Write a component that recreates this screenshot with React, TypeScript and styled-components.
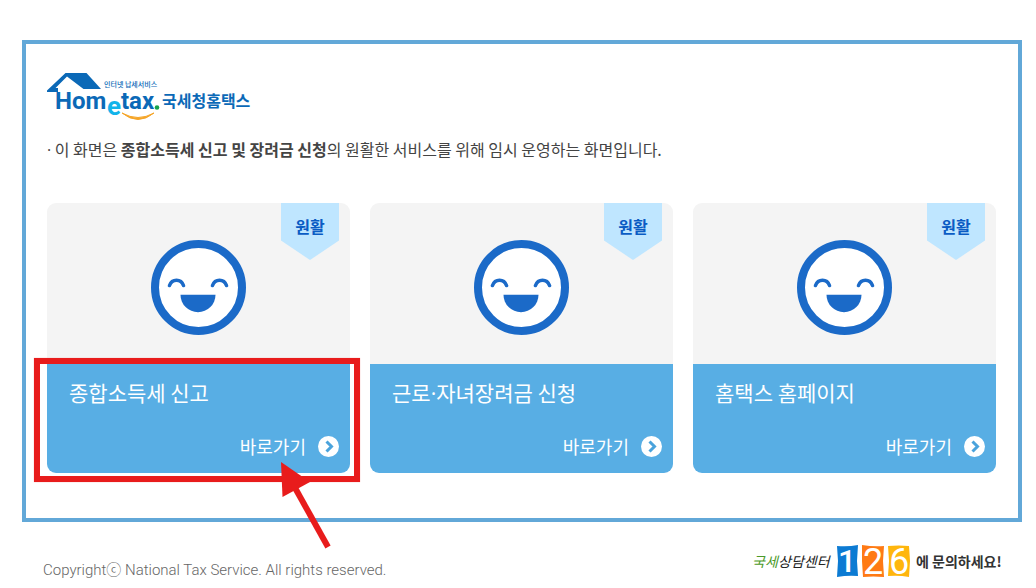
import React from "react";
import styled, { createGlobalStyle } from "styled-components";

const GlobalStyle = createGlobalStyle`
  * { box-sizing: border-box; }
  body {
    margin: 0;
    background: #ffffff;
    color: #444444;
    font-family: "Noto Sans CJK KR", sans-serif;
  }
`;

const Page = styled.div`
  padding: 40px 14px 8px 22px;
`;

const Frame = styled.main`
  border: 4px solid #62a8d8;
  padding: 28px 22px 45px 21px;
`;

const Brand = styled.h1`
  margin: 0;
  height: 50px;
  svg { display: block; }
`;

const Notice = styled.p`
  margin: 15px 0 42px;
  font-size: 16px;
  line-height: 24px;
`;

const MiddleDot = styled.span`
  font-family: "Open Sans", sans-serif;
  line-height: 1;
`;

const Cards = styled.div`
  display: grid;
  grid-template-columns: repeat(3, 1fr);
  gap: 20px;
`;

const Card = styled.section`
  position: relative;
`;

const Status = styled.div`
  position: relative;
  display: flex;
  justify-content: center;
  padding: 37px 0 29px;
  background: #f4f4f4;
  border-radius: 9px 9px 0 0;
`;

const Ribbon = styled.span`
  position: absolute;
  top: 0;
  right: 11px;
  width: 58px;
  height: 57px;
  padding-top: 11px;
  background: #bfe6ff;
  clip-path: polygon(0 0, 100% 0, 100% 66%, 50% 100%, 0 66%);
  color: #0a5cc4;
  font-size: 16px;
  font-weight: 700;
  line-height: 24px;
  text-align: center;
`;

const Panel = styled.div`
  position: relative;
  display: flex;
  flex-direction: column;
  gap: 30px;
  padding: 14px 11px 16px 22px;
  background: #58aee4;
  border-radius: 0 0 9px 9px;
  color: #ffffff;
`;

const Title = styled.h2`
  margin: 0;
  font-size: 21px;
  font-weight: 400;
  line-height: 28px;
`;

const GoLink = styled.a`
  display: flex;
  align-items: center;
  align-self: flex-end;
  gap: 12px;
  color: inherit;
  font-size: 18px;
  line-height: 21px;
  text-decoration: none;
`;

const Highlight = styled.div`
  position: absolute;
  inset: -6px -10px -9px -13px;
  border: 6px solid #e81c1c;
  box-shadow: 0 0 1px #f3a0a0;
  pointer-events: none;
`;

const Pointer = styled.svg`
  position: absolute;
  z-index: 1;
  top: 97px;
  right: 18px;
  pointer-events: none;
`;

const Footer = styled.footer`
  display: flex;
  justify-content: space-between;
  padding: 22px 19px 0 21px;
`;

const Copyright = styled.p`
  margin: 16px 0 0;
  color: #666666;
  font-family: Roboto, "Noto Sans CJK KR", sans-serif;
  font-size: 15px;
  font-weight: 300;
  line-height: 20px;
`;

const Banner = styled.svg`
  overflow: visible;
`;

const LogoText = styled.text<{ $size: number; $fill: string; $weight?: number; $latin?: boolean }>`
  fill: ${(p) => p.$fill};
  font-family: ${(p) => (p.$latin ? "Roboto, " : "")}"Noto Sans CJK KR", sans-serif;
  font-size: ${(p) => p.$size}px;
  font-weight: ${(p) => p.$weight ?? 700};
`;

const Script = styled(LogoText)`
  font-style: italic;
`;

function HometaxLogo() {
  return (
    <svg width="204" height="50" viewBox="0 0 204 50" role="img" aria-label="Hometax 국세청홈택스">
      <path d="M18.500 1 H39.500 L54 17 H36.500 L20 4.500 L8.500 16 H11 V20 H0 V18.500 Z" fill="#0b69b7" />
      <LogoText x="8" y="37" $size={24} $fill="#0b69b7" $latin>Hom</LogoText>
      <LogoText x="60" y="43" $size={26} $fill="#12b4ea" $latin>e</LogoText>
      <LogoText x="74" y="37" $size={24} $fill="#0b69b7" $latin>tax</LogoText>
      <circle cx="110" cy="35.500" r="2.300" fill="#16a34a" />
      <path d="M75 41 Q91 54 107 41 Q91 50 75 41 Z" fill="#f5a528" stroke="#f5a528" />
      <LogoText x="57" y="15" $size={7} $fill="#0b69b7" $weight={500}>인터넷 납세서비스</LogoText>
      <LogoText x="115" y="35" $size={16} $fill="#0b69b7">국세청홈택스</LogoText>
    </svg>
  );
}

function Smile() {
  return (
    <svg width="95" height="95" viewBox="1 1 95 95" fill="none" stroke="#1b6ac8" role="img" aria-label="원활">
      <circle cx="48.500" cy="48.500" r="43.500" fill="#ffffff" strokeWidth="8" />
      <path d="M19.500 46.500 C22 39.500 31 39.500 33.500 46.500 M62.500 46.500 C65 39.500 74 39.500 76.500 46.500" strokeWidth="3.600" strokeLinecap="round" />
      <path d="M30.500 55.700 H65.500 A17.500 17.500 0 0 1 30.500 55.700 Z" fill="#1b6ac8" stroke="none" />
    </svg>
  );
}

function GoIcon() {
  return (
    <svg width="21" height="21" viewBox="0 0 21 21" fill="none" aria-hidden="true">
      <circle cx="10.500" cy="10.500" r="10.500" fill="#ffffff" />
      <path d="M8.500 5.500 L13.500 10.500 L8.500 15.500" stroke="#4aa3dc" strokeWidth="3" />
    </svg>
  );
}

function CallCenter() {
  return (
    <Banner width="251" height="34" viewBox="0 0 251 34" role="img" aria-label="국세상담센터 126에 문의하세요!">
      <Script x="0" y="23" $size={14} $fill="#4c9a2a" $weight={400}>국세</Script>
      <Script x="26" y="23" $size={14} $fill="#222222" $weight={400}>상담센터</Script>
      <path d="M85 2 Q96 3 106 1 L105 17 L106 32 Q96 31 85 33 L86 17 Z" fill="#0c7bd3" />
      <path d="M110 1 Q122 3 132 2 L131 17 L132 33 Q121 32 111 33 L110 17 Z" fill="#ff7a14" />
      <path d="M136 2 Q147 1 157 2 L158 17 L157 33 Q147 31 136 32 L137 17 Z" fill="#ffb60d" />
      <LogoText x="86" y="28" $size={32} $fill="#ffffff" $weight={500} $latin>1</LogoText>
      <LogoText x="111" y="30" $size={36} $fill="#ffffff" $weight={400} $latin>2</LogoText>
      <LogoText x="137" y="30" $size={36} $fill="#ffffff" $weight={400} $latin>6</LogoText>
      <LogoText x="164" y="23" $size={14} $fill="#333333">에 문의하세요!</LogoText>
    </Banner>
  );
}

const services: React.ReactNode[] = [
  "종합소득세 신고",
  <>근로<MiddleDot>·</MiddleDot>자녀장려금 신청</>,
  "홈택스 홈페이지",
];

export default function App() {
  return (
    <Page>
      <GlobalStyle />
      <Frame>
        <Brand><HometaxLogo /></Brand>
        <Notice>
          <MiddleDot>·</MiddleDot> 이 화면은 <b>종합소득세 신고 및 장려금 신청</b>의 원활한 서비스를 위해 임시 운영하는 화면입니다.
        </Notice>
        <Cards>
          {services.map((name, i) => (
            <Card key={i}>
              <Status>
                <Smile />
                <Ribbon>원활</Ribbon>
              </Status>
              <Panel>
                <Title>{name}</Title>
                <GoLink href="#">바로가기<GoIcon /></GoLink>
                {i === 0 && (
                  <>
                    <Highlight />
                    <Pointer width="52" height="90" viewBox="0 0 52 90" aria-hidden="true">
                      <path d="M1 1 L30 21 L2.500 36 Z" fill="#e81c1c" />
                      <path d="M14 25 L48 86" stroke="#e81c1c" strokeWidth="6" />
                    </Pointer>
                  </>
                )}
              </Panel>
            </Card>
          ))}
        </Cards>
      </Frame>
      <Footer>
        <Copyright>Copyrightⓒ National Tax Service. All rights reserved.</Copyright>
        <CallCenter />
      </Footer>
    </Page>
  );
}
